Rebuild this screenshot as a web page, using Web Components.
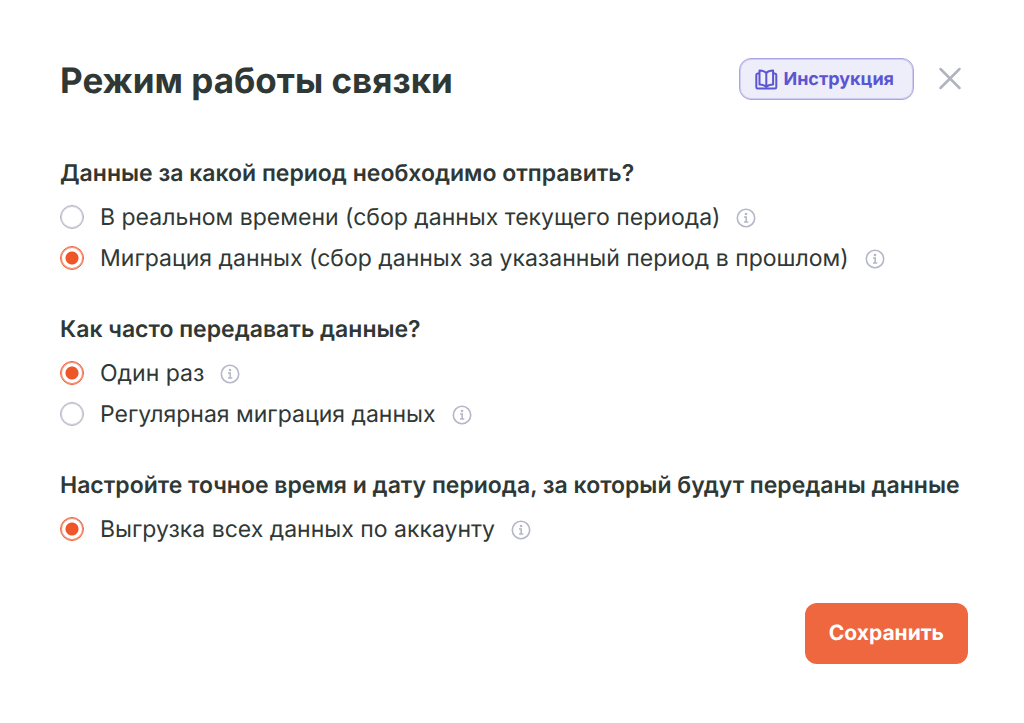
<!DOCTYPE html>
<html lang="ru">
<head>
<meta charset="utf-8">
<title>Режим работы связки</title>
<style>
body { margin: 0; background: #fff; color: #2f3835; font-family: Inter, "Noto Sans", sans-serif; text-rendering: geometricPrecision; }
</style>
</head>
<body>
<mode-dialog>
  <span slot="title">Режим работы связки</span>
  <guide-link slot="actions">Инструкция</guide-link>
  <close-button slot="actions"></close-button>
  <option-group legend="Данные за какой период необходимо отправить?">
    <radio-option>В реальном времени (сбор данных текущего периода)</radio-option>
    <radio-option checked>Миграция данных (сбор данных за указанный период в прошлом)</radio-option>
  </option-group>
  <option-group legend="Как часто передавать данные?">
    <radio-option checked>Один раз</radio-option>
    <radio-option>Регулярная миграция данных</radio-option>
  </option-group>
  <option-group legend="Настройте точное время и дату периода, за который будут переданы данные">
    <radio-option checked>Выгрузка всех данных по аккаунту</radio-option>
  </option-group>
  <save-button slot="footer">Сохранить</save-button>
</mode-dialog>
<script>
class BaseElement extends HTMLElement {
  constructor() {
    super();
    this.attachShadow({ mode: "open" }).innerHTML = this.constructor.markup;
  }
}

customElements.define("mode-dialog", class extends BaseElement {
  static markup = `
    <style>
      :host { display: block; padding: 56px 56px 56px 60px; }
      header { display: flex; align-items: flex-start; justify-content: space-between; height: 48px; }
      h1 { margin: 0; font-size: 35px; line-height: 50px; font-weight: 700; }
      .actions { display: flex; align-items: center; gap: 24px; padding: 2px 6px 0 0; }
      .body { display: flex; flex-direction: column; gap: 39px; margin-top: 53px; }
      footer { display: flex; justify-content: flex-end; margin-top: 58px; }
    </style>
    <header>
      <h1><slot name="title"></slot></h1>
      <div class="actions"><slot name="actions"></slot></div>
    </header>
    <div class="body"><slot></slot></div>
    <footer><slot name="footer"></slot></footer>`;
});

customElements.define("guide-link", class extends BaseElement {
  static markup = `
    <style>
      :host { display: block; }
      a { display: flex; align-items: center; gap: 5px; box-sizing: border-box; height: 42px; padding: 0 19px 0 14px;
          border: 1px solid #aaa6e4; box-shadow: inset 0 0 0 1px #cfccf1; border-radius: 12px; background: #eeedfa; color: #5b55d2;
          font-size: 18px; font-weight: 700; text-decoration: none; }
      svg { display: block; }
    </style>
    <a href="#guide">
      <svg width="24" height="24" viewBox="0 0 24 24" fill="none" stroke="currentColor" stroke-width="2" stroke-linejoin="round" stroke-linecap="round" aria-hidden="true">
        <path d="M12.300 6C10.500 4 8.500 3.600 5.500 3.600V17.500C8.500 17.500 10.500 18 12.300 20C14.100 18 16 17.500 19.100 17.500V3.600C16 3.600 14.100 4 12.300 6ZM12.300 6V20"/>
        <path d="M5 6.500H3.700Q2.300 6.500 2.300 8V20Q2.300 21.500 3.700 21.500H20.900Q22.300 21.500 22.300 20V8Q22.300 6.500 20.900 6.500H19.500"/>
      </svg>
      <slot></slot>
    </a>`;
});

customElements.define("close-button", class extends BaseElement {
  static markup = `
    <style>
      :host { display: block; }
      button { display: block; padding: 0; border: 0; background: none; color: #b1b3be; cursor: pointer; }
      svg { display: block; }
    </style>
    <button type="button" aria-label="Закрыть">
      <svg width="24" height="24" viewBox="0 0 24 24" fill="none" stroke="currentColor" stroke-width="2.500" stroke-linecap="round">
        <path d="M2.500 2L21.500 21M21.500 2L2.500 21"/>
      </svg>
    </button>`;
});

customElements.define("option-group", class extends BaseElement {
  static markup = `
    <style>
      :host { display: block; }
      fieldset { margin: 0; padding: 0; border: 0; min-width: 0; }
      legend { padding: 0; font-size: 23px; line-height: 32px; font-weight: 600; }
      .list { display: flex; flex-direction: column; gap: 9px; margin-top: 12px; }
    </style>
    <fieldset><legend></legend><div class="list"><slot></slot></div></fieldset>`;
  connectedCallback() {
    this.shadowRoot.querySelector("legend").textContent = this.getAttribute("legend");
    this.addEventListener("change-option", (e) => {
      for (const option of this.children) {
        option.shadowRoot.querySelector("input").checked = option === e.target;
      }
    });
  }
});

customElements.define("radio-option", class extends BaseElement {
  static markup = `
    <style>
      :host { display: flex; align-items: center; gap: 16px; }
      label { display: flex; align-items: center; gap: 16px; font-size: 23px; line-height: 32px; cursor: pointer; }
      input { appearance: none; flex: none; box-sizing: border-box; width: 24px; height: 24px; margin: 0;
              border: 1px solid #b3b3c5; box-shadow: inset 0 0 0 1px #d2d2de; border-radius: 50%; background: #fff; }
      input:checked { border-color: #ee5f38; box-shadow: inset 0 0 0 1px #f4947a; background: radial-gradient(circle, #ee5529 6px, #fff 7px); }
      svg { display: block; flex: none; margin-top: 2px; color: #b5b6c7; }
    </style>
    <label><input type="radio"><span><slot></slot></span></label>
    <svg width="20" height="20" viewBox="0 0 20 20" fill="none" stroke="currentColor" aria-hidden="true">
      <circle cx="10" cy="10" r="8.700" stroke-width="1.600"/>
      <path d="M8 9H10.200V14M8 14H12.300" stroke-width="1.600"/>
      <circle cx="10" cy="6" r="1.300" fill="currentColor" stroke="none"/>
    </svg>`;
  connectedCallback() {
    const input = this.shadowRoot.querySelector("input");
    input.checked = this.hasAttribute("checked");
    input.addEventListener("change", () => this.dispatchEvent(new CustomEvent("change-option", { bubbles: true })));
  }
});

customElements.define("save-button", class extends BaseElement {
  static markup = `
    <style>
      :host { display: block; }
      button { height: 61px; padding: 0 24px; border: 0; border-radius: 12px; background: #ee673e; color: #fff;
               font-family: inherit; font-size: 21px; font-weight: 700; text-rendering: inherit; cursor: pointer; }
    </style>
    <button type="button"><slot></slot></button>`;
});
</script>
</body>
</html>
